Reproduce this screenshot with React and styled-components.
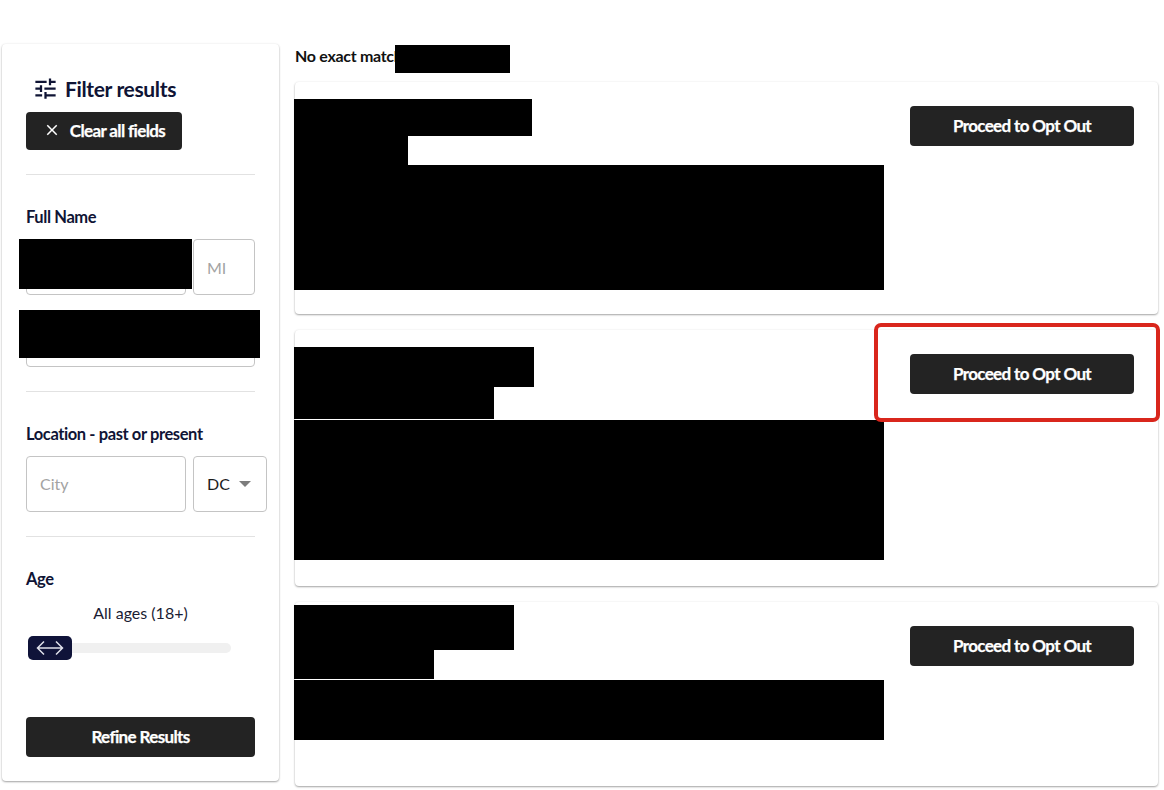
import styled, { createGlobalStyle } from 'styled-components';
import { MdTune, MdClose } from 'react-icons/md';

const GlobalStyle = createGlobalStyle`
  html,
  body {
    margin: 0;
    padding: 0;
    background: #fff;
  }

  * {
    box-sizing: border-box;
  }
`;

// each block: width, height, white gap below
const listings = [
  { id: 1, height: 232, top: 17, blocks: [[238, 37, 0], [114, 29, 0], [590, 125, 0]] },
  { id: 2, height: 256, top: 17, blocks: [[240, 40, 0], [200, 32, 1], [590, 140, 0]], marked: true },
  { id: 3, height: 184, top: 3, blocks: [[220, 45, 0], [140, 29, 1], [590, 60, 0]] },
];

const App = () => {
  return (
    <Page>
      <GlobalStyle />
      <Sidebar>
        <FilterTitle>
          <MdTune />
          Filter results
        </FilterTitle>
        <ClearButton>
          <MdClose />
          Clear all fields
        </ClearButton>
        <Divider />

        <Label>Full Name</Label>
        <InputRow $top={13}>
          <Field $width={160}>
            <NameRedaction />
          </Field>
          <Field $width={62}>
            <Placeholder>MI</Placeholder>
          </Field>
        </InputRow>
        <InputRow $top={15}>
          <Field $width={229} $height={57}>
            <LastNameRedaction />
          </Field>
        </InputRow>
        <Divider />

        <Label>Location - past or present</Label>
        <InputRow $top={13}>
          <Field $width={160} $lift>
            <Placeholder>City</Placeholder>
          </Field>
          <Field $width={74} $lift>
            <SelectValue>DC</SelectValue>
            <Caret />
          </Field>
        </InputRow>
        <Divider />

        <Label>Age</Label>
        <AgeValue>All ages (18+)</AgeValue>
        <Slider>
          <Thumb>
            <svg width="28" height="16" viewBox="0 0 28 16" fill="none">
              <path
                d="M8 1.500 1.500 8 8 14.500M20 1.500 26.500 8 20 14.500M1.500 8h25"
                stroke="#dfe1ea"
                strokeWidth="1.500"
              />
            </svg>
          </Thumb>
        </Slider>
        <RefineButton>Refine Results</RefineButton>
      </Sidebar>

      <Main>
        <Heading>
          No exact match
          <HeadingRedaction />
        </Heading>
        {listings.map((item) => (
          <Card key={item.id} $height={item.height}>
            <Blocks $top={item.top}>
              {item.blocks.map(([w, h, gap], i) => (
                <Block key={i} $w={w} $h={h} $gap={gap} />
              ))}
            </Blocks>
            <ActionCell>
              <OptOutButton>Proceed to Opt Out</OptOutButton>
              {item.marked && <Annotation />}
            </ActionCell>
          </Card>
        ))}
      </Main>
    </Page>
  );
};

const Page = styled.div`
  width: 1164px;
  height: 790px;
  padding: 44px 6px 0 2px;
  display: flex;
  align-items: flex-start;
  gap: 16px;
  overflow: hidden;
  background: #fff;
  font-family: 'Lato', sans-serif;
  color: #0f1435;
`;

const Sidebar = styled.aside`
  width: 277px;
  height: 737px;
  padding: 31px 24px 0;
  display: flex;
  flex-direction: column;
  border-radius: 4px;
  background: #fff;
  box-shadow: 0 1px 2px rgba(0, 0, 0, 0.35), 0 0 3px rgba(0, 0, 0, 0.06);
`;

const FilterTitle = styled.div`
  height: 26px;
  padding-left: 6px;
  display: flex;
  align-items: center;
  gap: 6px;
  font-size: 21px;
  font-weight: 700;
  letter-spacing: -0.35px;
  white-space: nowrap;

  svg {
    font-size: 27px;
    flex: none;
  }
`;

const DarkButton = styled.button`
  border: 0;
  border-radius: 4px;
  background: #232323;
  color: #fff;
  padding: 0 0 2px;
  font-family: inherit;
  font-size: 17px;
  font-weight: 700;
  letter-spacing: -0.63px;
  -webkit-text-stroke: 0.25px #fff;
  white-space: nowrap;
  display: flex;
  align-items: center;
  justify-content: center;
`;

const ClearButton = styled(DarkButton)`
  margin-top: 11px;
  width: 156px;
  height: 38px;
  gap: 9px;

  svg {
    font-size: 18px;
  }
`;

const Divider = styled.div`
  width: 229px;
  flex: none;
  height: 1px;
  margin: 24px 0 33px;
  background: #e2e2e2;
`;

const Label = styled.div`
  height: 18px;
  font-size: 16.500px;
  line-height: 18px;
  font-weight: 700;
  letter-spacing: -0.4px;
  white-space: nowrap;
`;

const InputRow = styled.div`
  margin-top: ${(p) => p.$top}px;
  display: flex;
  gap: 7px;
`;

const Field = styled.div`
  position: relative;
  flex: none;
  width: ${(p) => p.$width}px;
  height: ${(p) => p.$height || 56}px;
  padding: 0 13px ${(p) => (p.$lift ? 2 : 0)}px;
  display: flex;
  align-items: center;
  border: 1px solid #c4c4c4;
  border-radius: 4px;
  background: #fff;
  font-size: 16px;
`;

const Placeholder = styled.span`
  color: #a3a3a3;
`;

const SelectValue = styled.span`
  color: #1c1c1c;
`;

const Caret = styled.span`
  margin: 1px 0 0 9px;
  width: 0;
  height: 0;
  border-left: 6px solid transparent;
  border-right: 6px solid transparent;
  border-top: 6px solid #7d7d7d;
`;

const Redaction = styled.div`
  position: absolute;
  background: #000;
`;

const NameRedaction = styled(Redaction)`
  left: -8px;
  top: -1px;
  width: 173px;
  height: 50px;
`;

const LastNameRedaction = styled(Redaction)`
  left: -8px;
  top: -1px;
  width: 241px;
  height: 48px;
`;

const AgeValue = styled.div`
  margin-top: 15px;
  width: 229px;
  text-align: center;
  font-size: 16px;
  line-height: 19px;
  color: #1a1c33;
`;

const Slider = styled.div`
  position: relative;
  margin: 21px 0 0 2px;
  width: 203px;
  height: 10px;
  border-radius: 5px;
  background: #f0f0f0;
`;

const Thumb = styled.div`
  position: absolute;
  left: 0;
  top: -7px;
  width: 44px;
  height: 24px;
  display: flex;
  align-items: center;
  justify-content: center;
  border-radius: 5px;
  background: #0f1339;
`;

const RefineButton = styled(DarkButton)`
  margin-top: 64px;
  width: 229px;
  height: 40px;
`;

const Main = styled.main`
  width: 863px;
  display: flex;
  flex-direction: column;
  gap: 16px;
`;

const Heading = styled.div`
  position: relative;
  height: 21px;
  margin-top: 1px;
  font-size: 16px;
  line-height: 22px;
  font-weight: 700;
  letter-spacing: -0.3px;
  color: #111;
`;

const HeadingRedaction = styled(Redaction)`
  left: 100px;
  top: 0;
  width: 115px;
  height: 28px;
`;

const Card = styled.section`
  flex: none;
  height: ${(p) => p.$height}px;
  display: flex;
  justify-content: space-between;
  border-radius: 4px;
  background: #fff;
  box-shadow: 0 1px 2px rgba(0, 0, 0, 0.35), 0 0 3px rgba(0, 0, 0, 0.05);
`;

const Blocks = styled.div`
  margin: ${(p) => p.$top}px 0 0 -1px;
  display: flex;
  flex-direction: column;
`;

const Block = styled.div`
  width: ${(p) => p.$w}px;
  height: ${(p) => p.$h}px;
  margin-bottom: ${(p) => p.$gap}px;
  background: #000;
`;

const ActionCell = styled.div`
  position: relative;
  width: 248px;
  padding: 24px 24px 0 0;
`;

const OptOutButton = styled(DarkButton)`
  width: 224px;
  height: 40px;
`;

const Annotation = styled.div`
  position: absolute;
  left: -36px;
  top: -7px;
  width: 286px;
  height: 99px;
  border: 4px solid #d9261c;
  border-radius: 7px;
  pointer-events: none;
`;

export default App;
